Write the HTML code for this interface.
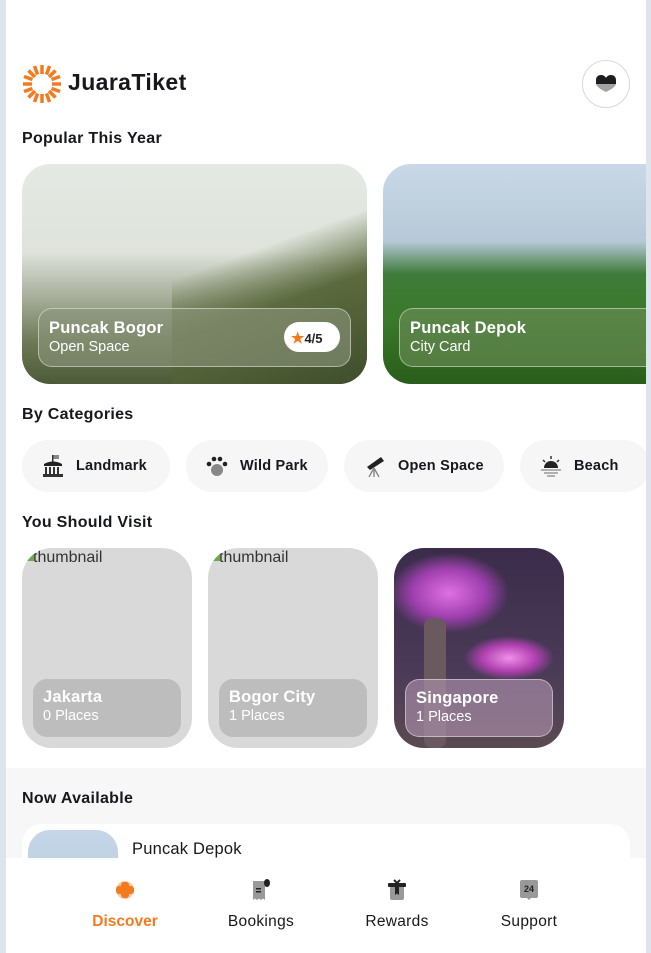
<!DOCTYPE html>
<html><head><meta charset="utf-8"><style>
*{margin:0;padding:0;box-sizing:border-box}
body{width:651px;height:953px;background:#dde4ec;font-family:"Liberation Sans",sans-serif;overflow:hidden;position:relative;color:#16181d}
.page{position:absolute;left:6px;top:0;width:640px;height:953px;background:#fff;overflow:hidden}
.a{position:absolute}
h2{position:absolute;left:16px;font-size:16px;font-weight:bold;letter-spacing:.3px}
.card{position:absolute;top:164px;width:345px;height:220px;border-radius:28px;overflow:hidden}
.ov{position:absolute;left:16px;top:144px;width:313px;height:59px;border-radius:14px;background:rgba(150,160,140,.55);border:1px solid rgba(255,255,255,.45);color:#fff;padding:10px 10px}
.ov b{display:block;font-size:16.5px;letter-spacing:.2px}
.ov span{font-size:14.5px}
.chip{position:absolute;top:440px;height:52px;border-radius:26px;background:#f6f6f7;font-weight:bold;font-size:14.5px;letter-spacing:.2px;display:flex;align-items:center;gap:12px;padding-left:20px}
.tile{position:absolute;top:548px;width:170px;height:200px;border-radius:30px;background:#d9d9d9;overflow:hidden;font-size:16px;color:#333}
.tov{position:absolute;left:11px;top:131px;width:148px;height:58px;border-radius:14px;background:#bdbdbe;color:#fff;padding:9px 10px}
.tov b{display:block;font-size:16.5px;letter-spacing:.2px}.tov span{font-size:14.5px}
.nav{position:absolute;left:0;top:858px;width:640px;height:95px;background:#fff}
.ni{position:absolute;top:55px;width:100px;text-align:center;font-size:15.5px;letter-spacing:.3px}
</style></head><body><div class="page">
<svg class="a" style="left:16px;top:64px" width="40" height="40" viewBox="0 0 40 40"><g stroke="#f47a1f" stroke-width="3.5" stroke-linecap="butt">
<line x1="20" y1="1" x2="20" y2="10"/><line x1="20" y1="30" x2="20" y2="39"/><line x1="1" y1="20" x2="10" y2="20"/><line x1="30" y1="20" x2="39" y2="20"/>
<line x1="6.5" y1="6.5" x2="13" y2="13"/><line x1="27" y1="27" x2="33.5" y2="33.5"/><line x1="33.5" y1="6.5" x2="27" y2="13"/><line x1="13" y1="27" x2="6.5" y2="33.5"/>
<line x1="12.5" y1="2" x2="15.5" y2="10.5"/><line x1="27.5" y1="2" x2="24.5" y2="10.5"/><line x1="12.5" y1="38" x2="15.5" y2="29.5"/><line x1="27.5" y1="38" x2="24.5" y2="29.5"/>
<line x1="2" y1="12.5" x2="10.5" y2="15.5"/><line x1="2" y1="27.5" x2="10.5" y2="24.5"/><line x1="38" y1="12.5" x2="29.5" y2="15.5"/><line x1="38" y1="27.5" x2="29.5" y2="24.5"/></g></svg>
<div class="a" style="left:62px;top:69px;font-size:23px;font-weight:bold;letter-spacing:.4px">JuaraTiket</div>
<div class="a" style="left:576px;top:60px;width:48px;height:48px;border-radius:50%;border:1px solid #d9d9dd;background:#fff"></div>
<svg class="a" style="left:590px;top:75px" width="20" height="18" viewBox="0 0 20 18"><path d="M0 9V5C0 2 2 0 5 0c2 0 4 1 5 3 1-2 3-3 5-3 3 0 5 2 5 5v4z" fill="#1c1d21"/><path d="M0 9h20c-1 3-4 5-10 8C4 14 1 12 0 9z" fill="#a3a3a3"/></svg>
<h2 style="top:130px">Popular This Year</h2>
<div class="card" style="left:16px;background:linear-gradient(180deg,#e4e9e3 0%,#dfe3dc 40%,#a9b09c 60%,#6f7b58 80%,#4c5a38 100%)">
<div class="a" style="left:150px;top:40px;width:200px;height:180px;background:linear-gradient(160deg,transparent 30%,#5b6b3e 55%,#3e4d2b 100%)"></div>
<div class="ov" style="background:rgba(140,150,125,.6)"><b>Puncak Bogor</b><span>Open Space</span>
<div class="a" style="right:10px;top:13px;width:56px;height:30px;border-radius:15px;background:#fff;color:#222;font-size:13px;font-weight:bold;padding:7px 0 0 7px"><span style="color:#f47a1f;font-size:15px">★</span>4/5</div></div></div>
<div class="card" style="left:377px;background:linear-gradient(180deg,#c9d8e6 0%,#b7c9d8 35%,#3f7b3a 50%,#3a7a2a 70%,#295d1a 100%)">
<div class="ov" style="background:rgba(110,140,90,.6)"><b>Puncak Depok</b><span>City Card</span></div></div>
<h2 style="top:406px">By Categories</h2>
<div class="chip" style="left:16px;width:148px"><svg width="22" height="22" viewBox="0 0 22 22"><rect x="11" y="0" width="6" height="4" fill="#888"/><rect x="10" y="0" width="1.5" height="7" fill="#333"/><path d="M2 9Q11 4 20 9V11H2z" fill="#222"/><g fill="#333"><rect x="3" y="12" width="2" height="7"/><rect x="7" y="12" width="2" height="7"/><rect x="11" y="12" width="2" height="7"/><rect x="15" y="12" width="2" height="7"/><rect x="1" y="19" width="20" height="3"/></g></svg>Landmark</div>
<div class="chip" style="left:180px;width:142px"><svg width="22" height="22" viewBox="0 0 22 22"><circle cx="3" cy="9" r="2.3" fill="#222"/><circle cx="8" cy="4" r="2.3" fill="#222"/><circle cx="14" cy="4" r="2.3" fill="#222"/><circle cx="19" cy="9" r="2.3" fill="#222"/><ellipse cx="11" cy="15" rx="6" ry="6" fill="#888"/></svg>Wild Park</div>
<div class="chip" style="left:338px;width:160px"><svg width="22" height="22" viewBox="0 0 22 22"><path d="M3 12L17 2 20 6 6 15z" fill="#222"/><path d="M10 13L5 22M10 13L15 22M10 13V22" stroke="#888" stroke-width="1.4"/></svg>Open Space</div>
<div class="chip" style="left:514px;width:130px"><svg width="22" height="22" viewBox="0 0 22 22"><path d="M4 13a7 7 0 0 1 14 0z" fill="#222"/><g stroke="#333" stroke-width="1.5"><line x1="11" y1="1" x2="11" y2="4"/><line x1="3" y1="5" x2="5" y2="7"/><line x1="19" y1="5" x2="17" y2="7"/></g><g stroke="#999" stroke-width="1.5"><line x1="1" y1="15" x2="21" y2="15"/><line x1="4" y1="18" x2="18" y2="18"/><line x1="7" y1="21" x2="15" y2="21"/></g></svg>Beach</div>
<h2 style="top:514px">You Should Visit</h2>
<div class="tile" style="left:16px"><div class="a" style="left:5px;top:5px;width:7px;height:8px;background:linear-gradient(135deg,#cfe3f0 50%,#6aaa4a 50%)"></div><div class="a" style="left:11px;top:1px">thumbnail</div><div class="tov"><b>Jakarta</b><span>0 Places</span></div></div>
<div class="tile" style="left:202px"><div class="a" style="left:5px;top:5px;width:7px;height:8px;background:linear-gradient(135deg,#cfe3f0 50%,#6aaa4a 50%)"></div><div class="a" style="left:11px;top:1px">thumbnail</div><div class="tov"><b>Bogor City</b><span>1 Places</span></div></div>
<div class="tile" style="left:388px;background:radial-gradient(ellipse 60px 40px at 55px 45px,#e070e0,#a040b0 60%,transparent 100%),radial-gradient(ellipse 45px 22px at 115px 110px,#f090e8,#b040b0 60%,transparent 100%),linear-gradient(180deg,#3a2c4a,#4a3a58 60%,#5a4a50)"><div class="a" style="left:30px;top:70px;width:22px;height:130px;background:#6a5a60;border-radius:8px"></div><div class="tov" style="background:rgba(180,150,180,.6);border:1px solid rgba(255,255,255,.45)"><b>Singapore</b><span>1 Places</span></div></div>
<div class="a" style="left:0;top:768px;width:640px;height:90px;background:#f7f7f7"></div>
<h2 style="top:790px">Now Available</h2>
<div class="a" style="left:16px;top:824px;width:608px;height:60px;border-radius:20px;background:#fff"></div>
<div class="a" style="left:22px;top:830px;width:90px;height:60px;border-radius:22px 22px 0 0;background:linear-gradient(180deg,#c6d6e8,#b8cce0)"></div>
<div class="a" style="left:126px;top:840px;font-size:16.5px;letter-spacing:.2px">Puncak Depok</div>
<div class="nav">
<div class="ni" style="left:69px;color:#f47a1f;font-weight:bold;letter-spacing:0">Discover</div>
<div class="ni" style="left:205px">Bookings</div>
<div class="ni" style="left:341px">Rewards</div>
<div class="ni" style="left:473px">Support</div>
<svg class="a" style="left:108px;top:21px" width="22" height="22" viewBox="0 0 22 22"><circle cx="11" cy="11" r="10" fill="#fbc9a4"/><path d="M11 1a10 10 0 0 1 0 20a10 10 0 0 1 0-20zM1 11h20" stroke="#fff" stroke-width="2" fill="none"/><rect x="7" y="3" width="8" height="16" rx="3" fill="#f47a1f"/><rect x="2" y="7" width="18" height="8" rx="3" fill="#f47a1f"/></svg>
<svg class="a" style="left:244px;top:21px" width="22" height="22" viewBox="0 0 22 22"><path d="M3 2h12v19l-2-1.5-2 1.5-2-1.5-2 1.5-2-1.5-2 1.5z" fill="#999"/><ellipse cx="17" cy="4" rx="3" ry="4" fill="#222"/><rect x="6" y="9" width="5" height="1.5" fill="#222"/><rect x="6" y="12" width="5" height="1.5" fill="#222"/></svg>
<svg class="a" style="left:380px;top:21px" width="22" height="22" viewBox="0 0 22 22"><rect x="4" y="7" width="14" height="14" rx="2" fill="#999"/><rect x="2" y="4" width="18" height="4" rx="1" fill="#222"/><path d="M8 1l3 3 3-3" stroke="#222" stroke-width="2" fill="none"/><path d="M9 8h4v8l-2-1.5-2 1.5z" fill="#222"/></svg>
<svg class="a" style="left:512px;top:21px" width="22" height="22" viewBox="0 0 22 22"><path d="M4 1h14a2 2 0 0 1 2 2v14a2 2 0 0 1-2 2h-5l-2 2-2-2H4a2 2 0 0 1-2-2V3a2 2 0 0 1 2-2z" fill="#999"/><text x="11" y="13" font-size="9" font-weight="bold" text-anchor="middle" fill="#222" font-family="Liberation Sans">24</text></svg>
</div>
</div></body></html>
